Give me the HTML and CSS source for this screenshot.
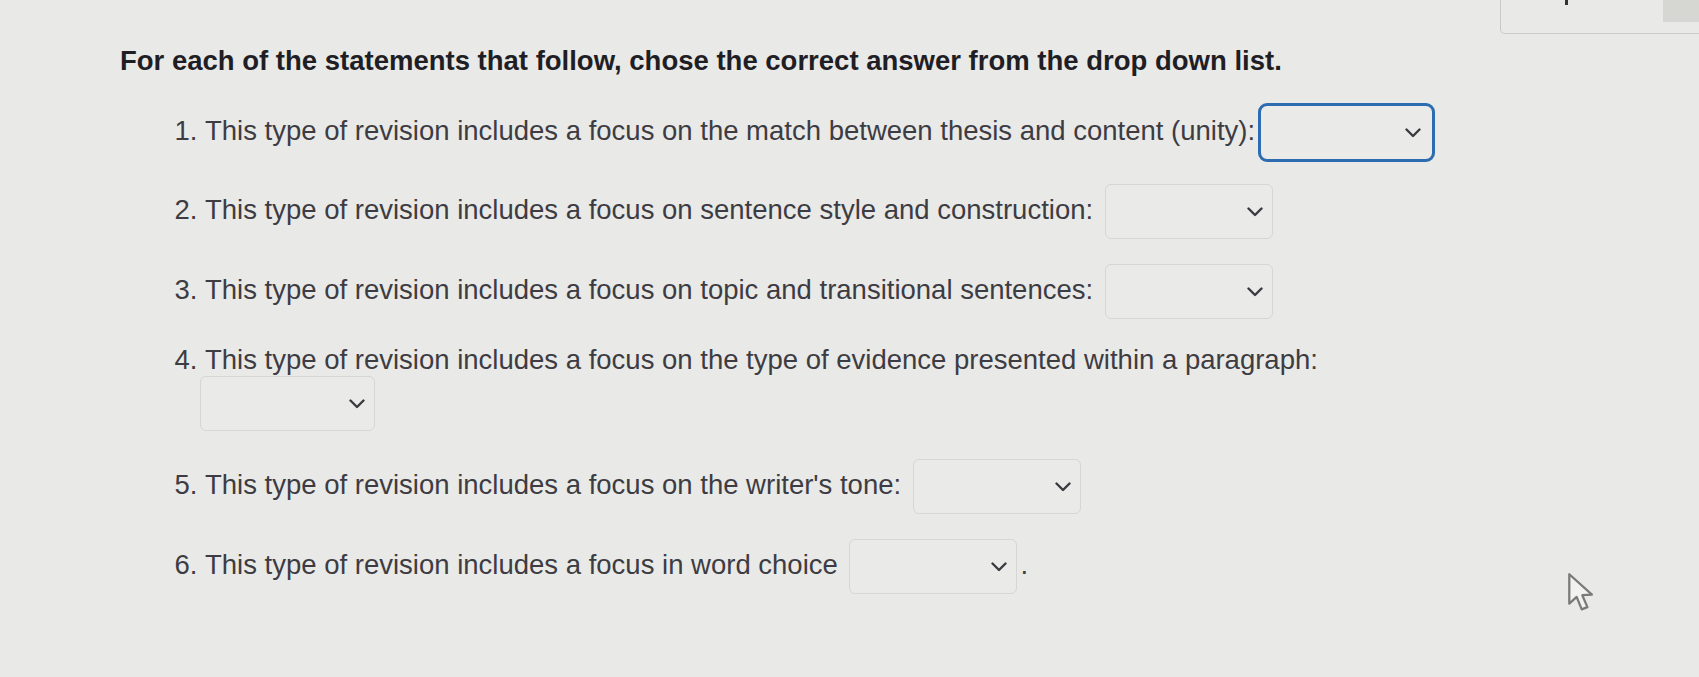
FILE: index.html
```html
<!DOCTYPE html>
<html lang="en">
<head>
<meta charset="utf-8">
<title>Revision quiz</title>
<link rel="stylesheet" href="styles.css">
</head>
<body>
<div class="page">
  <main class="content">
    <h1 class="heading">For each of the statements that follow, chose the correct answer from the drop down list.</h1>
    <ol class="items">
      <li class="item item-first">This type of revision includes a focus on the match between thesis and content (unity):<span class="select focused"><svg class="chev" viewBox="0 0 16 10" width="16" height="10"><path d="M1.5 1.5 L8 8 L14.5 1.5" fill="none" stroke="#3a3a40" stroke-width="2.4" stroke-linecap="round" stroke-linejoin="round"/></svg></span></li>
      <li class="item">This type of revision includes a focus on sentence style and construction: <span class="select"><svg class="chev" viewBox="0 0 16 10" width="16" height="10"><path d="M1.5 1.5 L8 8 L14.5 1.5" fill="none" stroke="#3a3a40" stroke-width="2.4" stroke-linecap="round" stroke-linejoin="round"/></svg></span></li>
      <li class="item">This type of revision includes a focus on topic and transitional sentences: <span class="select"><svg class="chev" viewBox="0 0 16 10" width="16" height="10"><path d="M1.5 1.5 L8 8 L14.5 1.5" fill="none" stroke="#3a3a40" stroke-width="2.4" stroke-linecap="round" stroke-linejoin="round"/></svg></span></li>
      <li class="item item-wrap">This type of revision includes a focus on the type of evidence presented within a paragraph:<br><span class="select select-wide"><svg class="chev" viewBox="0 0 16 10" width="16" height="10"><path d="M1.5 1.5 L8 8 L14.5 1.5" fill="none" stroke="#3a3a40" stroke-width="2.4" stroke-linecap="round" stroke-linejoin="round"/></svg></span></li>
      <li class="item">This type of revision includes a focus on the writer's tone: <span class="select"><svg class="chev" viewBox="0 0 16 10" width="16" height="10"><path d="M1.5 1.5 L8 8 L14.5 1.5" fill="none" stroke="#3a3a40" stroke-width="2.4" stroke-linecap="round" stroke-linejoin="round"/></svg></span></li>
      <li class="item">This type of revision includes a focus in word choice <span class="select"><svg class="chev" viewBox="0 0 16 10" width="16" height="10"><path d="M1.5 1.5 L8 8 L14.5 1.5" fill="none" stroke="#3a3a40" stroke-width="2.4" stroke-linecap="round" stroke-linejoin="round"/></svg></span><span class="dot">.</span></li>
    </ol>
  </main>
  <aside class="side">
    <div class="tab-box"><span class="tab-mark"></span><span class="tab-shade"></span></div>
  </aside>
</div>
<svg class="cursor" viewBox="0 0 30 38" width="34" height="43"><path d="M2 2 L2 28 L8.5 22 L13 33 L18 31 L13.5 20.5 L22 20 Z" fill="#f2f2f0" stroke="#7a7a7a" stroke-width="2" stroke-linejoin="round"/></svg>
</body>
</html>
```

FILE: styles.css
```css
html, body {
  margin: 0;
  padding: 0;
  background: #e9e9e7;
}

body {
  font-family: "Liberation Sans", Arial, sans-serif;
  color: #3d3c43;
  width: 1699px;
  height: 677px;
  overflow: hidden;
  position: relative;
}

.page {
  display: flex;
  align-items: flex-start;
}

.content {
  flex: 1;
  padding: 45px 0 0 120px;
}

.heading {
  margin: 0;
  font-size: 27.5px;
  line-height: 32px;
  font-weight: bold;
  color: #1f1e24;
}

.items {
  margin: 26px 0 0 0;
  padding: 0 0 0 85px;
  font-size: 27.5px;
  line-height: 32px;
}

.item {
  margin-bottom: 25px;
  padding-left: 0;
}

.item-first {
  margin-bottom: 22px;
}

.item-wrap {
  margin-bottom: 28px;
}

.select {
  display: inline-flex;
  align-items: center;
  justify-content: flex-end;
  box-sizing: border-box;
  width: 168px;
  height: 55px;
  padding-right: 9px;
  margin-left: 4px;
  border: 1px solid #d6d6d4;
  border-radius: 6px;
  background: #eaeae8;
  vertical-align: middle;
}

.select-wide {
  width: 175px;
  margin-left: -5px;
}

.select.focused {
  width: 177px;
  height: 59px;
  margin-left: 3px;
  border: 3px solid #2d6cb0;
  border-radius: 9px;
  padding-right: 11px;
}

.chev {
  display: block;
}

.dot {
  margin-left: 3px;
}

.side {
  width: 199px;
  flex: none;
}

.tab-box {
  box-sizing: border-box;
  height: 34px;
  border-left: 1px solid #c9c9c6;
  border-bottom: 1px solid #c9c9c6;
  border-bottom-left-radius: 5px;
  display: flex;
  align-items: flex-start;
  justify-content: space-between;
  padding-left: 64px;
}

.tab-mark {
  width: 3px;
  height: 5px;
  background: #333;
}

.tab-shade {
  width: 36px;
  height: 22px;
  background: #d6d6d2;
}

.cursor {
  position: absolute;
  left: 1567px;
  top: 572px;
}
```
